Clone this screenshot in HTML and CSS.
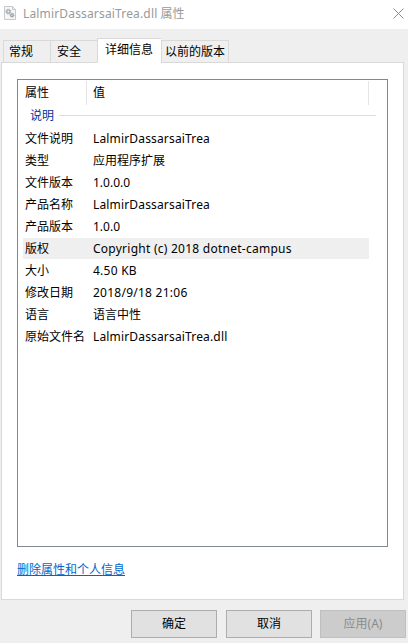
FILE: index.html
```html
<!DOCTYPE html>
<html lang="zh-CN">
<head>
<meta charset="utf-8">
<title>LalmirDassarsaiTrea.dll 属性</title>
<link rel="stylesheet" href="styles.css">
</head>
<body>
<div class="dialog">
  <header class="titlebar">
    <svg class="file-icon" width="12" height="14" viewBox="0 0 12 14">
      <path d="M.5.5h8l3 3v10H.5z" fill="#f6f7f8" stroke="#c6c8ca"/>
      <path d="M8.5.5v3h3" fill="none" stroke="#c6c8ca"/>
      <circle cx="4.3" cy="5.6" r="1.7" fill="none" stroke="#a3a9ae" stroke-width="1.4"/>
      <circle cx="4.3" cy="5.6" r="2.6" fill="none" stroke="#a3a9ae" stroke-width=".8" stroke-dasharray="1 1.04"/>
      <circle cx="8" cy="9.2" r="1.3" fill="none" stroke="#9da3a8" stroke-width="1.3"/>
      <circle cx="8" cy="9.2" r="2.1" fill="none" stroke="#9da3a8" stroke-width=".8" stroke-dasharray=".9 .75"/>
    </svg>
    <h1 class="title"><span class="latin">LalmirDassarsaiTrea.dll</span> 属性</h1>
    <svg class="close" width="11" height="11" viewBox="0 0 11 11"><path d="M.5.5l10 10M10.5.5l-10 10" stroke="#8c8c8c" fill="none"/></svg>
  </header>
  <nav class="tabs">
    <span class="tab general">常规</span>
    <span class="tab security">安全</span>
    <span class="tab details active">详细信息</span>
    <span class="tab previous">以前的版本</span>
  </nav>
  <main class="panel">
    <section class="list">
      <div class="head"><span class="name">属性</span><span class="value">值</span></div>
      <div class="group"><span>说明</span><i class="rule"></i></div>
      <div class="row"><span class="name">文件说明</span><span class="value latin">LalmirDassarsaiTrea</span></div>
      <div class="row"><span class="name">类型</span><span class="value">应用程序扩展</span></div>
      <div class="row"><span class="name">文件版本</span><span class="value">1.0.0.0</span></div>
      <div class="row"><span class="name">产品名称</span><span class="value latin">LalmirDassarsaiTrea</span></div>
      <div class="row"><span class="name">产品版本</span><span class="value">1.0.0</span></div>
      <div class="row selected"><span class="name">版权</span><span class="value wide">Copyright (c) 2018 dotnet-campus</span></div>
      <div class="row"><span class="name">大小</span><span class="value wide">4.50 KB</span></div>
      <div class="row"><span class="name">修改日期</span><span class="value wide">2018/9/18 21:06</span></div>
      <div class="row"><span class="name">语言</span><span class="value">语言中性</span></div>
      <div class="row"><span class="name">原始文件名</span><span class="value latin">LalmirDassarsaiTrea.dll</span></div>
    </section>
    <a class="link">删除属性和个人信息</a>
  </main>
  <footer class="actions">
    <button class="btn">确定</button>
    <button class="btn">取消</button>
    <button class="btn apply" disabled>应用(A)</button>
  </footer>
</div>
</body>
</html>
```
FILE: styles.css
```css
* { box-sizing: border-box; }
body {
  margin: 0;
  background: #efefef;
  color: #000;
  font: 12px/16px "Noto Sans", "Noto Sans CJK SC", sans-serif;
}
.dialog { width: 408px; height: 643px; overflow: hidden; }
.titlebar {
  display: flex;
  align-items: center;
  height: 29px;
  padding: 0 4px 3px 4px;
  background: #fff;
}
.title { margin: 2px 0 0 7px; font-size: 12px; font-weight: 400; color: #999; white-space: nowrap; }
.latin { letter-spacing: .16px; }
.wide { letter-spacing: .25px; }
.close { margin-left: auto; }
.tabs {
  display: flex;
  align-items: flex-end;
  height: 34px;
  padding-left: 3px;
  margin-bottom: -1px;
  position: relative;
}
.tab {
  height: 23px;
  border: 1px solid #d9d9d9;
  border-right: 0;
  padding: 3px 0 0 5px;
  white-space: nowrap;
}
.general { width: 47px; }
.security { width: 47px; padding-left: 6px; }
.details.active {
  width: 64px;
  height: 25px;
  padding: 3px 0 0 7px;
  background: #fff;
  border-bottom-color: #fff;
}
.previous { width: 68px; padding-left: 3px; border-right: 1px solid #d9d9d9; }
.panel {
  width: 403px;
  height: 538px;
  margin-left: 1px;
  padding: 16px 15px;
  border: 1px solid #d9d9d9;
  background: #fff;
}
.list { width: 371px; height: 468px; border: 1px solid #828790; }
.head, .row { display: flex; white-space: nowrap; }
.head {
  width: 351px;
  height: 24px;
  margin-top: 1px;
  padding: 4px 0 0 7px;
  border-right: 1px solid #e5e5e5;
}
.name { width: 68px; flex: none; }
.head .name { width: 62px; height: 24px; margin-top: -4px; padding-top: 4px; border-right: 1px solid #e5e5e5; }
.head .value { margin-left: 6px; }
.group { display: flex; align-items: center; height: 22px; padding-left: 12px; color: #003399; }
.rule { width: 317px; height: 1px; margin: 0 0 2px 5px; background: #d8dcec; }
.row { width: 346px; height: 21px; margin: 0 0 1px 5px; padding: 3px 0 0 2px; }
.list .row:nth-child(3) { margin-top: 1px; }
.selected { background: #efefef; }
.link {
  display: inline-block;
  margin-top: 15px;
  color: #0066cc;
  text-decoration: underline;
}
.actions { display: flex; gap: 9px; padding: 10px 0 0 131px; }
.btn {
  width: 86px;
  height: 28px;
  padding: 0;
  border: 1px solid #adadad;
  background: #e1e1e1;
  color: #000;
  font: inherit;
}
.apply { margin-left: -1px; border-color: #bfbfbf; background: #ccc; color: #8b8b8b; }
```
